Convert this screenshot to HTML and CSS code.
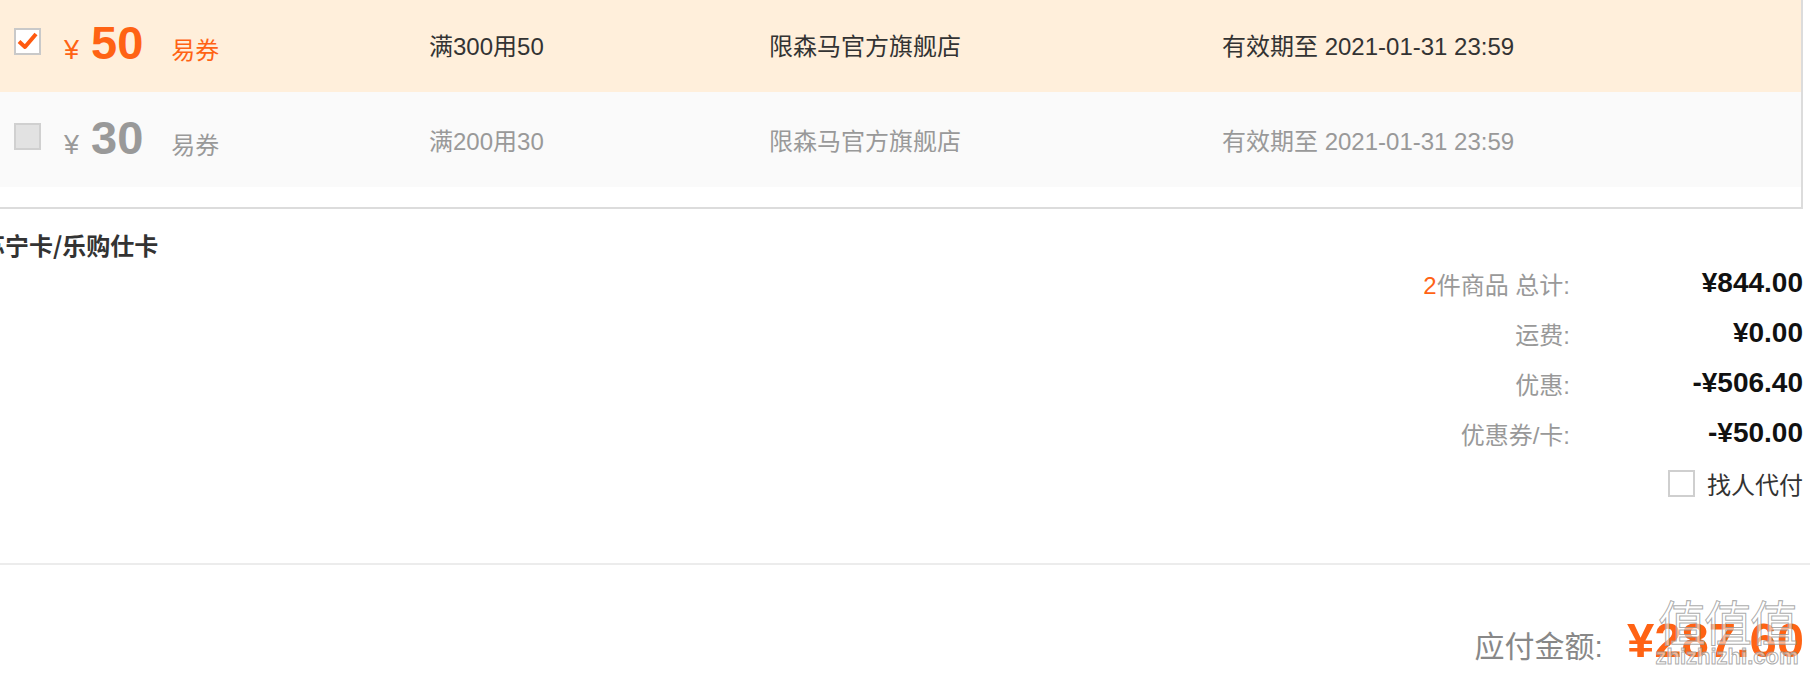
FILE: index.html
```html
<!DOCTYPE html>
<html lang="zh-CN">
<head>
    <meta charset="UTF-8">
    <title>确认订单</title>
    <link rel="stylesheet" href="styles.css">
</head>
<body>
    <div class="coupon-box">
        <div class="coupon-row active">
            <div class="face">
                <span class="check on">
                    <svg width="23" height="23" viewBox="0 0 23 23"><path d="M3 11.5 L9 17 L20 4" fill="none" stroke="#ff5a10" stroke-width="4" stroke-linejoin="round"/></svg>
                </span>
                <span class="amount">
                    <span class="yen">¥</span>
                    <span class="num">50</span>
                    <span class="kind">易券</span>
                </span>
            </div>
            <div class="cond">满300用50</div>
            <div class="shop">限森马官方旗舰店</div>
            <div class="date">有效期至 2021-01-31 23:59</div>
        </div>
        <div class="coupon-row disabled">
            <div class="face">
                <span class="check off"></span>
                <span class="amount">
                    <span class="yen">¥</span>
                    <span class="num">30</span>
                    <span class="kind">易券</span>
                </span>
            </div>
            <div class="cond">满200用30</div>
            <div class="shop">限森马官方旗舰店</div>
            <div class="date">有效期至 2021-01-31 23:59</div>
        </div>
    </div>

    <div class="card-title">苏宁卡/乐购仕卡</div>

    <div class="summary">
        <div class="sum-row">
            <span class="label"><em>2</em>件商品 总计:</span>
            <span class="value">¥844.00</span>
        </div>
        <div class="sum-row">
            <span class="label">运费:</span>
            <span class="value">¥0.00</span>
        </div>
        <div class="sum-row">
            <span class="label">优惠:</span>
            <span class="value">-¥506.40</span>
        </div>
        <div class="sum-row">
            <span class="label">优惠券/卡:</span>
            <span class="value">-¥50.00</span>
        </div>
        <div class="sum-row">
            <label class="proxy"><span class="box"></span>找人代付</label>
        </div>
    </div>

    <div class="divider"></div>

    <div class="total">
        <span class="total-label">应付金额:</span>
        <span class="total-value">¥287.60</span>
        <div class="watermark">
            <span class="wm-big">值值值</span>
            <span class="wm-small">zhizhizhi.com</span>
        </div>
    </div>
</body>
</html>
```

FILE: styles.css
```css
body {
    margin: 0;
    padding: 0;
    width: 1810px;
    font-family: "Liberation Sans", "Noto Sans CJK SC", sans-serif;
    color: #333;
    background: #fff;
    overflow: hidden;
}

/* coupon list */
.coupon-box {
    width: 1803px;
    box-sizing: border-box;
    margin-top: -3px;
    padding-bottom: 20px;
    border-right: 2px solid #dcdcdc;
    border-bottom: 2px solid #dcdcdc;
}
.coupon-row {
    height: 95px;
    display: flex;
    align-items: center;
    padding-left: 14px;
    font-size: 24px;
}
.coupon-row.active {
    background-color: #ffefdb;
    color: #333;
}
.coupon-row.disabled {
    background-color: #fafafa;
    color: #999;
}
.face {
    width: 415px;
    display: flex;
    align-items: center;
}
.check {
    width: 27px;
    height: 27px;
    box-sizing: border-box;
    border: 2px solid #c9c9c9;
    margin-bottom: 6px;
    display: flex;
    align-items: center;
    justify-content: center;
}
.check.on {
    background: #fff;
}
.check.off {
    background: #e2e2e2;
    border-color: #d0d0d0;
}
.amount {
    display: flex;
    align-items: baseline;
    line-height: 46px;
    margin: 5px 0 0 23px;
}
.yen {
    font-size: 27px;
}
.num {
    font-size: 47px;
    font-weight: bold;
    margin-left: 12px;
}
.kind {
    font-size: 24px;
    margin-left: 28px;
}
.active .amount {
    color: #ff6314;
}
.disabled .amount {
    color: #999;
}
.cond {
    width: 340px;
}
.shop {
    width: 453px;
}

/* cards */
.card-title {
    margin: 22px 0 0 -19px;
    line-height: 28px;
    font-size: 24px;
    font-weight: bold;
    font-family: "Noto Sans CJK SC", sans-serif;
    color: #333;
}

/* summary */
.summary {
    padding-right: 7px;
    margin-top: -1px;
}
.sum-row {
    height: 50px;
    display: flex;
    justify-content: flex-end;
    align-items: center;
}
.label {
    font-size: 24px;
    color: #999;
}
.label em {
    font-style: normal;
    color: #ff6314;
}
.value {
    width: 233px;
    text-align: right;
    font-size: 28px;
    font-weight: bold;
    color: #111;
}
.proxy {
    display: flex;
    align-items: center;
    font-size: 24px;
    color: #333;
}
.proxy .box {
    width: 27px;
    height: 27px;
    box-sizing: border-box;
    border: 2px solid #cfcfcf;
    margin-right: 12px;
}

.divider {
    margin-top: 55px;
    height: 2px;
    background: #ececec;
}

/* total */
.total {
    position: relative;
    margin-top: 47px;
    padding-right: 6px;
    display: flex;
    justify-content: flex-end;
    align-items: baseline;
    line-height: 56px;
}
.total-label {
    font-size: 30px;
    color: #888;
}
.total-value {
    margin-left: 24px;
    font-size: 49px;
    font-weight: bold;
    color: #ff6314;
}
.watermark {
    position: absolute;
    right: 8px;
    top: -20px;
    width: 150px;
    display: flex;
    flex-direction: column;
    align-items: center;
    color: rgba(255, 255, 255, 0.55);
    -webkit-text-stroke: 1px rgba(150, 150, 150, 0.8);
}
.wm-big {
    font-family: "Noto Sans CJK SC", sans-serif;
    font-size: 48px;
    line-height: 56px;
    letter-spacing: -2px;
}
.wm-small {
    font-size: 22px;
    line-height: 22px;
    font-weight: bold;
    margin-top: -2px;
}
```
